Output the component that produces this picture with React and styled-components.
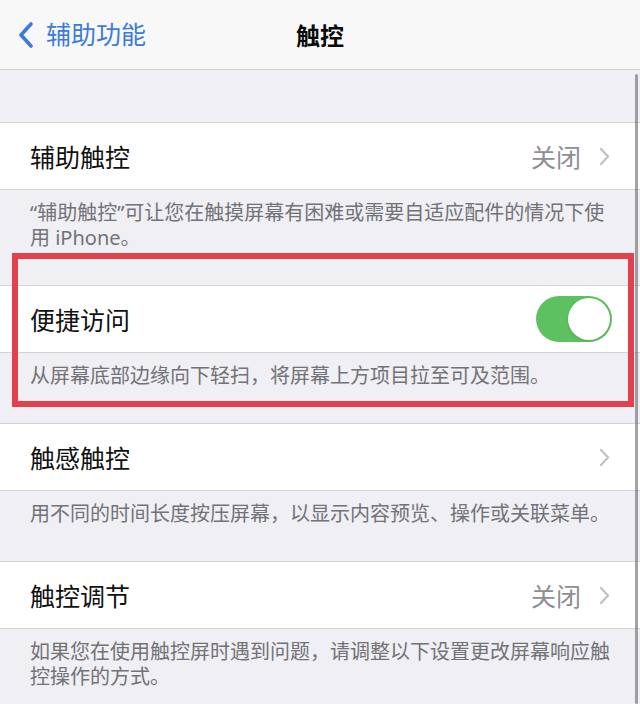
import React from "react";
import styled, { createGlobalStyle } from "styled-components";

const GlobalStyle = createGlobalStyle`
  html, body {
    margin: 0;
    padding: 0;
    background: #efeff4;
  }
  body {
    font-family: "Noto Sans", "Noto Sans CJK SC", sans-serif;
    -webkit-font-smoothing: antialiased;
  }
`;

const Screen = styled.div`
  position: relative;
  width: 640px;
  height: 704px;
  overflow: hidden;
  background: #efeff4;
`;

const NavBar = styled.header`
  height: 69px;
  display: grid;
  grid-template-columns: 1fr auto 1fr;
  align-items: center;
  background: #f8f8f9;
  border-bottom: 1px solid #d3d3d6;
`;

const BackButton = styled.div`
  display: flex;
  align-items: center;
  gap: 12px;
  padding-left: 18px;
  color: #3c7bd6;
  font-size: 25px;
  line-height: 1;
`;

const Title = styled.h1`
  margin: 0;
  font-size: 24px;
  font-weight: 700;
  color: #0a0a0a;
`;

const Section = styled.section`
  position: relative;
  padding-top: ${({ $gap }) => $gap}px;
`;

const Row = styled.div`
  height: 66px;
  display: flex;
  align-items: center;
  padding: 0 30px;
  background: #fff;
  border-top: 1px solid #d3d3d6;
  border-bottom: 1px solid #d3d3d6;
`;

const Label = styled.span`
  flex: 1;
  font-size: 25px;
  color: #111;
`;

const Detail = styled.span`
  font-size: 25px;
  color: #8e8e93;
  margin-right: 18px;
`;

const Footer = styled.p`
  margin: 0;
  padding: 10px 30px 0;
  font-size: 20px;
  line-height: 25px;
  color: #727277;
`;

const Toggle = styled.div`
  width: 76px;
  height: 46px;
  border-radius: 23px;
  background: #5ec161;
  display: flex;
  align-items: center;
  justify-content: ${({ $on }) => ($on ? "flex-end" : "flex-start")};
  padding: 2px;
  box-sizing: border-box;
  margin-right: -2px;
`;

const Knob = styled.div`
  width: 42px;
  height: 42px;
  border-radius: 50%;
  background: #fff;
  box-shadow: 0 1px 3px rgba(0, 0, 0, 0.15);
`;

const Frame = styled.div`
  position: absolute;
  top: 3px;
  left: 12px;
  right: 6px;
  bottom: -19px;
  border: 6px solid #e2404d;
  pointer-events: none;
`;

const ScrollIndicator = styled.div`
  position: absolute;
  top: 74px;
  right: 2px;
  width: 3px;
  bottom: 0;
  border-radius: 2px;
  background: rgba(90, 90, 95, 0.55);
`;

const BackChevron = () => (
  <svg width="16" height="26" viewBox="0 0 16 26">
    <path
      d="M13 2 L3 13 L13 24"
      fill="none"
      stroke="currentColor"
      strokeWidth="3.6"
      strokeLinecap="round"
      strokeLinejoin="round"
    />
  </svg>
);

const Chevron = () => (
  <svg width="11" height="19" viewBox="0 0 11 19">
    <path
      d="M2 2 L9 9.5 L2 17"
      fill="none"
      stroke="#c4c4c8"
      strokeWidth="2.4"
      strokeLinecap="round"
      strokeLinejoin="round"
    />
  </svg>
);

const sections = [
  {
    label: "辅助触控",
    detail: "关闭",
    footer: "“辅助触控”可让您在触摸屏幕有困难或需要自适应配件的情况下使用 iPhone。",
  },
  {
    label: "便捷访问",
    toggle: true,
    footer: "从屏幕底部边缘向下轻扫，将屏幕上方项目拉至可及范围。",
    marked: true,
  },
  {
    label: "触感触控",
    footer: "用不同的时间长度按压屏幕，以显示内容预览、操作或关联菜单。",
  },
  {
    label: "触控调节",
    detail: "关闭",
    footer: "如果您在使用触控屏时遇到问题，请调整以下设置更改屏幕响应触控操作的方式。",
  },
];

export default function App() {
  return (
    <>
      <GlobalStyle />
      <Screen>
        <NavBar>
          <BackButton>
            <BackChevron />
            <span>辅助功能</span>
          </BackButton>
          <Title>触控</Title>
          <div />
        </NavBar>

        {sections.map((s, i) => (
          <Section key={s.label} $gap={i === 0 ? 52 : 35}>
            <Row>
              <Label>{s.label}</Label>
              {s.detail && <Detail>{s.detail}</Detail>}
              {s.toggle ? (
                <Toggle $on>
                  <Knob />
                </Toggle>
              ) : (
                <Chevron />
              )}
            </Row>
            <Footer>{s.footer}</Footer>
            {s.marked && <Frame />}
          </Section>
        ))}

        <ScrollIndicator />
      </Screen>
    </>
  );
}
